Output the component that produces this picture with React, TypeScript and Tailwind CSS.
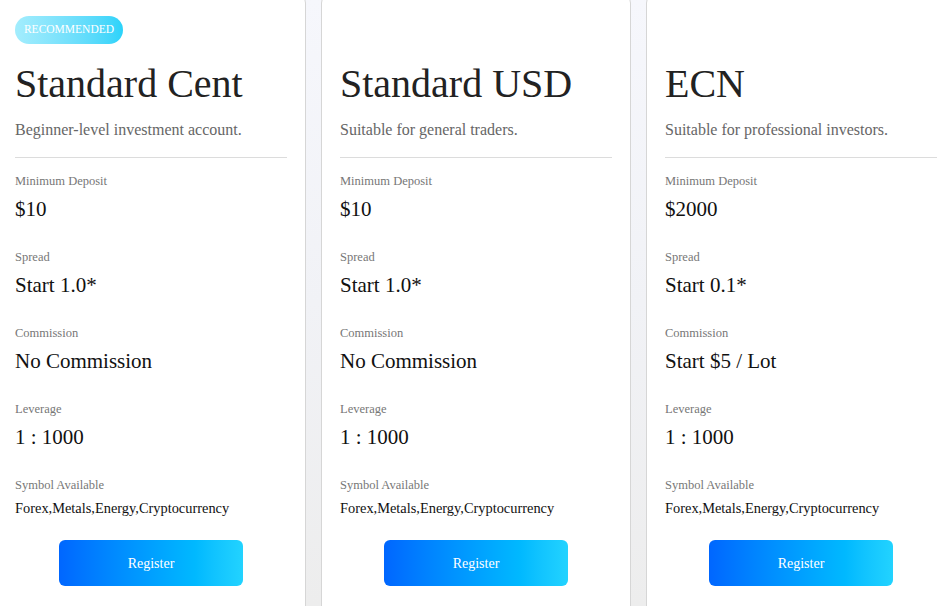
const plans = [
  {
    name: "Standard Cent",
    desc: "Beginner-level investment account.",
    recommended: true,
    deposit: "$10",
    spread: "Start 1.0*",
    commission: "No Commission",
    leverage: "1 : 1000",
  },
  {
    name: "Standard USD",
    desc: "Suitable for general traders.",
    recommended: false,
    deposit: "$10",
    spread: "Start 1.0*",
    commission: "No Commission",
    leverage: "1 : 1000",
  },
  {
    name: "ECN",
    desc: "Suitable for professional investors.",
    recommended: false,
    deposit: "$2000",
    spread: "Start 0.1*",
    commission: "Start $5 / Lot",
    leverage: "1 : 1000",
  },
];

const Item = ({ label, value }: { label: string; value: string }) => (
  <div className="mb-[25px]">
    <div className="text-[12.5px] leading-[18px] text-[#777]">{label}</div>
    <div className="mt-[5px] text-[21px] leading-[28px] text-[#111]">{value}</div>
  </div>
);

const PlanCard = ({ plan }: { plan: (typeof plans)[number] }) => (
  <div className="w-[310px] shrink-0 h-[640px] rounded-t-[10px] border border-[#d6d6d6] bg-white px-[18px] pt-[22px]">
    <div className="h-[28px]">
      {plan.recommended && (
        <span className="inline-flex h-[28px] w-[108px] items-center justify-center rounded-full bg-gradient-to-r from-[#a3edfd] to-[#2ad3fa] text-[11.5px] text-white">
          RECOMMENDED
        </span>
      )}
    </div>
    <h2 className="mt-[16px] text-[40px] leading-[48px] text-[#222]">{plan.name}</h2>
    <p className="mt-[10px] text-[16px] leading-[24px] text-[#666]">{plan.desc}</p>
    <div className="mt-[15px] mb-[14px] h-px bg-[#dcdcdc]" />
    <Item label="Minimum Deposit" value={plan.deposit} />
    <Item label="Spread" value={plan.spread} />
    <Item label="Commission" value={plan.commission} />
    <Item label="Leverage" value={plan.leverage} />
    <div>
      <div className="text-[12.5px] leading-[18px] text-[#777]">Symbol Available</div>
      <div className="mt-[4px] text-[14.4px] leading-[20px] text-[#111]">
        Forex,Metals,Energy,Cryptocurrency
      </div>
    </div>
    <div className="mt-[22px] flex justify-center">
      <button className="h-[46px] w-[184px] rounded-[6px] bg-gradient-to-r from-[#0066ff] to-[#22d3ff] text-[14px] text-white">
        Register
      </button>
    </div>
  </div>
);

export default function App() {
  return (
    <div
      className="h-[606px] w-[937px] overflow-hidden bg-gradient-to-b from-[#f6f7fc] via-[#f1f2f6] to-[#ededed]"
      style={{ fontFamily: '"Liberation Serif", serif' }}
    >
      <div className="-ml-[4px] -mt-[7px] flex gap-[15px]">
        {plans.map((p) => (
          <PlanCard key={p.name} plan={p} />
        ))}
      </div>
    </div>
  );
}
